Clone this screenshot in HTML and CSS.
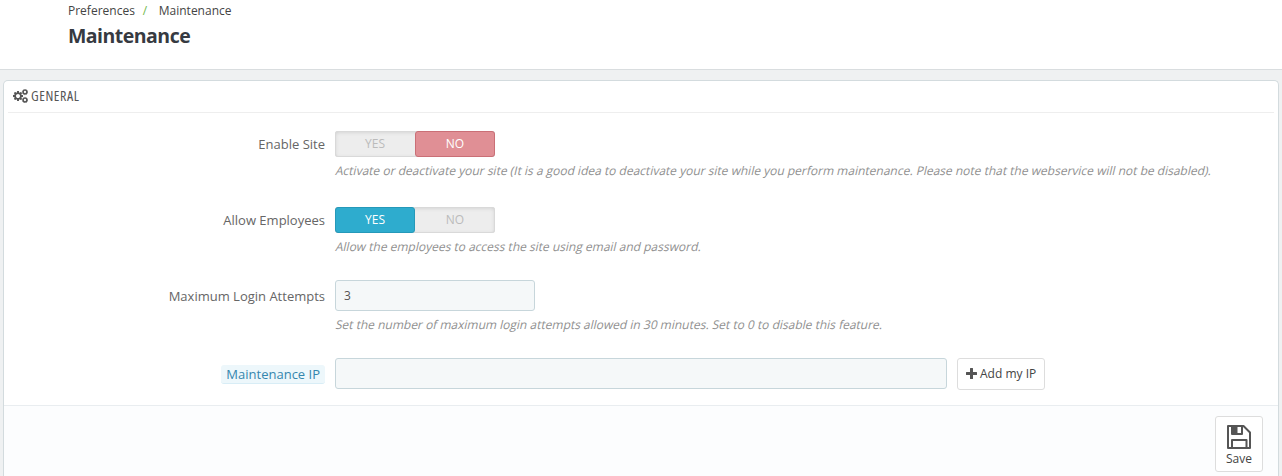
FILE: index.html
```html
<!DOCTYPE html>
<html lang="en">
<head>
<meta charset="utf-8">
<title>Maintenance</title>
<link rel="stylesheet" href="styles.css">
</head>
<body>
<header class="page-head">
  <nav class="breadcrumb"><span>Preferences</span><span class="sep">/</span><span>Maintenance</span></nav>
  <h1 class="page-title">Maintenance</h1>
</header>
<main class="panel">
  <div class="panel-heading">
    <svg class="icon-cogs" viewBox="0 0 1920 1792" fill="currentColor"><path d="M896 896q0-106-75-181t-181-75-181 75-75 181 75 181 181 75 181-75 75-181zm384-91v185q0 10-7 19.500t-16 10.500l-155 24q-11 35-32 76 34 48 90 115 7 11 7 20 0 12-7 19-23 30-82.500 89.500t-78.500 59.500q-11 0-21-7l-115-90q-37 19-77 31-11 108-23 155-7 24-30 24h-186q-11 0-20-7.500t-10-17.500l-23-153q-34-10-75-31l-118 89q-7 7-20 7-11 0-21-8-144-133-144-160 0-9 7-19 10-14 41-53t47-61q-23-44-35-82l-152-24q-10-1-17-9.500t-7-19.500v-185q0-10 7-19.500t16-10.500l155-24q11-35 32-76-34-48-90-115-7-11-7-20 0-12 7-20 22-30 82-89t79-59q11 0 21 7l115 90q34-18 77-32 11-108 23-154 7-24 30-24h186q11 0 20 7.500t10 17.500l23 153q34 10 75 31l118-89q8-7 20-7 11 0 21 8 144 133 144 160 0 8-7 19-12 16-42 54t-45 60q23 48 34 82l152 23q10 2 17 10.500t7 19.500z"/><g fill="none" stroke="currentColor"><circle cx="1536" cy="384" r="240" stroke-width="190"/><circle cx="1536" cy="384" r="340" stroke-width="90" stroke-dasharray="178 89"/><circle cx="1536" cy="1408" r="240" stroke-width="190"/><circle cx="1536" cy="1408" r="340" stroke-width="90" stroke-dasharray="178 89"/></g></svg>
    <span class="heading-text">GENERAL</span>
  </div>
  <div class="form">
    <div class="row">
      <label class="label">Enable Site</label>
      <div class="field">
        <div class="switch"><span class="opt">YES</span><span class="opt no">NO</span></div>
        <p class="help">Activate or deactivate your site (It is a good idea to deactivate your site while you perform maintenance. Please note that the webservice will not be disabled).</p>
      </div>
    </div>
    <div class="row">
      <label class="label">Allow Employees</label>
      <div class="field">
        <div class="switch"><span class="opt yes">YES</span><span class="opt">NO</span></div>
        <p class="help">Allow the employees to access the site using email and password.</p>
      </div>
    </div>
    <div class="row tall">
      <label class="label">Maximum Login Attempts</label>
      <div class="field">
        <input class="input short" type="text" value="3">
        <p class="help">Set the number of maximum login attempts allowed in 30 minutes. Set to 0 to disable this feature.</p>
      </div>
    </div>
    <div class="row last">
      <label class="label"><span class="tip">Maintenance IP</span></label>
      <div class="field inline">
        <input class="input long" type="text">
        <button class="btn" type="button"><svg class="icon-plus" viewBox="0 0 11 11" fill="currentColor"><path d="M4.500 0h2q.5 0 .5.5V4h3.500q.5 0 .5.5v2q0 .5-.5.5H7v3.500q0 .5-.5.5h-2q-.5 0-.5-.5V7H.5q-.5 0-.5-.5v-2Q0 4 .5 4H4V.5q0-.5.5-.5z"/></svg>Add my IP</button>
      </div>
    </div>
  </div>
  <footer class="panel-footer">
    <button class="save" type="button"><svg class="icon-save" viewBox="0 0 24 24"><path fill="none" stroke="currentColor" stroke-width="2" stroke-linejoin="round" d="M1 1H16.500L23 7.500V23H1zM5 23V15H19.500V23M5 1V9H15V1"/><path fill="currentColor" d="M4 1h6.500v8H4z"/></svg><span>Save</span></button>
  </footer>
</main>
</body>
</html>
```
FILE: styles.css
```css
* { box-sizing: border-box; }
body {
  margin: 0;
  height: 476px;
  overflow: hidden;
  background: #eff1f2;
  color: #555;
  font: 12px/17px "Open Sans", sans-serif;
}
.page-head {
  height: 70px;
  padding: 2px 0 0 68px;
  background: #fff;
  border-bottom: 1px solid #d9dddf;
}
.breadcrumb { display: flex; color: #444; }
.sep { margin: 0 11.500px 0 8px; color: #72b94c; }
.page-title {
  margin: 4px 0 0;
  color: #363a41;
  font-size: 19.500px;
  line-height: 26px;
  font-weight: 700;
  letter-spacing: -.52px;
}
.panel {
  display: flex;
  flex-direction: column;
  height: 396px;
  margin: 10px 3px 0;
  padding: 0 4px;
  background: #fff;
  border: 1px solid #d3dbde;
  border-bottom: 0;
  border-radius: 5px 5px 0 0;
}
.panel-heading {
  display: flex;
  align-items: center;
  height: 32px;
  padding: 0 0 1px 5px;
  border-bottom: 1px solid #eee;
}
.icon-cogs { width: 15px; height: 14px; margin-right: 3px; }
.heading-text {
  padding-bottom: 2px;
  font-size: 14px;
  font-stretch: 75%;
  font-weight: 450;
  letter-spacing: .6px;
}
.form { padding-top: 18px; }
.row { display: flex; height: 76px; }
.row.tall { height: 78px; margin-top: -3px; }
.row.last { height: 47px; }
.label {
  width: 317px;
  padding-top: 4px;
  text-align: right;
  font-size: 13px;
  line-height: 18px;
  color: #666;
}
.tall .label, .last .label { padding-top: 7px; }
.field { margin-left: 10px; }
.inline { display: flex; align-items: flex-start; gap: 10px; }
.switch {
  display: flex;
  width: 160px;
  height: 26px;
  background: #ededed;
  border-radius: 3px;
  box-shadow: inset 0 0 0 1px #d9d9d9, inset 0 1px 4px #ccc;
}
.opt {
  width: 80px;
  height: 26px;
  text-align: center;
  line-height: 26px;
  color: #bbb;
}
.opt.no { background: #e08f95; border: 1px solid #ca6f76; border-radius: 3px; color: #fff; line-height: 24px; }
.opt.yes { background: #2eacce; border: 1px solid #2699b9; border-radius: 3px; color: #fff; line-height: 24px; }
/* Slanted roman letters keep the width of the upright text. */
.help {
  width: max-content;
  margin: 5px 0 0;
  color: #909090;
  white-space: nowrap;
  transform: skewX(-13deg);
  transform-origin: 0 13px;
}
.input {
  display: block;
  height: 31px;
  padding: 0 8px;
  background: #f5f8f9;
  border: 1px solid #c7d6db;
  border-radius: 3px;
  color: #555;
  font: 12px "Open Sans", sans-serif;
}
.short { width: 200px; }
.long { width: 612px; }
.tip {
  display: inline-block;
  height: 19px;
  padding: 0 5px;
  background: #edf7fb;
  border-bottom: 1px solid #d8edf6;
  border-radius: 3px;
  color: #3586ae;
}
.btn, .save {
  display: flex;
  align-items: center;
  background: #fff;
  border: 1px solid #ddd;
  border-radius: 3px;
  color: #444;
  font: 12px/17px "Open Sans", sans-serif;
}
.btn { width: 88px; height: 32px; padding: 0 0 2px 8px; white-space: nowrap; }
.icon-plus { width: 11px; height: 11px; margin-right: 3px; color: #555; }
.panel-footer {
  display: flex;
  justify-content: flex-end;
  flex: 1;
  margin: 0 -4px;
  padding: 10px 15px 0 0;
  background: #fcfdfe;
  border-top: 1px solid #e9edf0;
}
.save { flex-direction: column; width: 48px; height: 56px; padding: 8px 0 0; }
.icon-save { width: 24px; height: 24px; color: #555; margin-bottom: 1px; }
```
